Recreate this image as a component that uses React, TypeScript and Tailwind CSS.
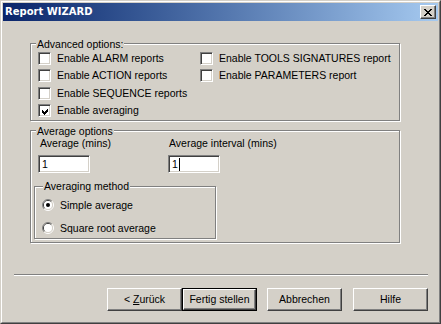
import React from 'react';

const raised = 'border border-t-white border-l-white border-r-[#404040] border-b-[#404040] shadow-[inset_-1px_-1px_0_#808080]';
const sunken =
    'border border-t-[#808080] border-l-[#808080] border-r-white border-b-white shadow-[inset_1px_1px_0_#404040,inset_-1px_-1px_0_#d4d0c8]';
const etched = 'relative border border-[#808080] shadow-[inset_1px_1px_0_#fff,1px_1px_0_#fff]';

function Legend({ text, left, top }: { text: string; left: string; top: string }) {
    return (
        <span className={`absolute ${left} ${top} px-px bg-[#d4d0c8] leading-[13px] whitespace-nowrap`}>
            {text}
        </span>
    );
}

function Checkbox({ label, checked }: { label: string; checked?: boolean }) {
    return (
        <div className="flex items-center gap-[6px] h-[13px] leading-[13px] whitespace-nowrap">
            <div className={`w-[13px] h-[13px] bg-white shrink-0 ${sunken}`}>
                {checked && (
                    <svg width="11" height="11" viewBox="-1 -1 11 11" shapeRendering="crispEdges">
                        <path d="M2 4 L4 6 L8 2 L8 5 L4 9 L2 7 Z" fill="#000" />
                    </svg>
                )}
            </div>
            <span>{label}</span>
        </div>
    );
}

function Radio({ label, checked }: { label: string; checked?: boolean }) {
    return (
        <div className="flex items-center gap-[6px] h-[14px] leading-[13px] whitespace-nowrap">
            <svg width="12" height="12" viewBox="0 0 12 12" className="shrink-0">
                <path d="M2.1 9.9 A5.5 5.5 0 0 1 9.9 2.1" stroke="#808080" fill="none" />
                <path d="M9.9 2.1 A5.5 5.5 0 0 1 2.1 9.9" stroke="#fff" fill="none" />
                <path d="M2.8 9.2 A4.5 4.5 0 0 1 9.2 2.8" stroke="#404040" fill="none" />
                <path d="M9.2 2.8 A4.5 4.5 0 0 1 2.8 9.2" stroke="#d4d0c8" fill="none" />
                <circle cx="6" cy="6" r="4" fill="#fff" />
                {checked && <circle cx="6" cy="6" r="2" fill="#000" />}
            </svg>
            <span>{label}</span>
        </div>
    );
}

function Button({ children, isDefault }: { children: React.ReactNode; isDefault?: boolean }) {
    const face = (
        <div className={`w-full h-full flex items-center justify-center leading-[13px] ${raised}`}>
            {children}
        </div>
    );
    if (isDefault) {
        return <div className="w-[75px] h-[23px] border border-black">{face}</div>;
    }
    return <div className="w-[75px] h-[23px]">{face}</div>;
}

export default function App() {
    return (
        <div className="w-[441px] h-[324px] bg-[#d4d0c8] border border-t-[#d4d0c8] border-l-[#d4d0c8] border-r-[#404040] border-b-[#404040] font-['Liberation_Sans',Arial,sans-serif] text-[10.5px] text-black">
            <div className="h-full p-px border border-t-white border-l-white border-r-[#808080] border-b-[#808080] flex flex-col">
                {/* title bar */}
                <div className="h-[18px] shrink-0 flex items-center justify-between pl-[2px] pr-[2px] bg-linear-to-r from-[#0a246a] to-[#a6caf0]">
                    <span className="font-['DejaVu_Sans',sans-serif] font-bold text-[10px] text-white leading-[12px]">
                        Report WIZARD
                    </span>
                    <div className={`w-[16px] h-[14px] bg-[#d4d0c8] flex items-center justify-center ${raised}`}>
                        <svg width="8" height="7" viewBox="0 0 8 7" shapeRendering="crispEdges">
                            <path d="M0 0h2v1H0zM6 0h2v1H6zM1 1h2v1H1zM5 1h2v1H5zM2 2h4v1H2zM3 3h2v1H3zM2 4h4v1H2zM1 5h2v1H1zM5 5h2v1H5zM0 6h2v1H0zM6 6h2v1H6z" fill="#000" />
                        </svg>
                    </div>
                </div>

                {/* body */}
                <div className="flex flex-col">
                    <div className={`ml-[27px] mt-[22px] w-[370px] h-[78px] ${etched}`}>
                        <Legend text="Advanced options:" left="left-[5px]" top="top-[-6px]" />
                        <div className="flex pt-[8px] pl-[7px]">
                            <div className="w-[162px] flex flex-col">
                                <div className="h-[17px]">
                                    <Checkbox label="Enable ALARM reports" />
                                </div>
                                <div className="h-[18px]">
                                    <Checkbox label="Enable ACTION reports" />
                                </div>
                                <div className="h-[17px]">
                                    <Checkbox label="Enable SEQUENCE reports" />
                                </div>
                                <div className="h-[13px]">
                                    <Checkbox label="Enable averaging" checked />
                                </div>
                            </div>
                            <div className="flex flex-col">
                                <div className="h-[17px]">
                                    <Checkbox label="Enable TOOLS SIGNATURES report" />
                                </div>
                                <div className="h-[18px]">
                                    <Checkbox label="Enable PARAMETERS report" />
                                </div>
                            </div>
                        </div>
                    </div>

                    <div className={`ml-[27px] mt-[9px] w-[370px] h-[113px] ${etched}`}>
                        <Legend text="Average options" left="left-[5px]" top="top-[-6px]" />
                        <div className="flex pt-[6px] pl-[7px]">
                            <div className="w-[130px] flex flex-col">
                                <span className="pl-[2px] leading-[13px]">Average (mins)</span>
                                <div className={`mt-[5px] w-[52px] h-[18px] bg-white pl-[3px] flex items-center leading-[13px] ${sunken}`}>
                                    1
                                </div>
                            </div>
                            <div className="flex flex-col">
                                <span className="pl-px leading-[13px]">Average interval (mins)</span>
                                <div className={`mt-[5px] w-[52px] h-[18px] bg-white pl-[3px] flex items-center leading-[13px] ${sunken}`}>
                                    1<span className="w-px h-[13px] bg-black ml-[1px]" />
                                </div>
                            </div>
                        </div>
                        <div className={`ml-[3px] mt-[13px] w-[182px] h-[53px] ${etched}`}>
                            <Legend text="Averaging method" left="left-[8px]" top="top-[-7px]" />
                            <div className="flex flex-col gap-[9px] pt-[11px] pl-[7px]">
                                <Radio label="Simple average" checked />
                                <Radio label="Square root average" />
                            </div>
                        </div>
                    </div>

                    <div className="ml-[11px] mt-[31px] w-[414px] h-[2px] border-t border-t-[#808080] border-b border-b-white" />

                    <div className="flex mt-[12px] ml-[104px]">
                        <Button>
                            &lt; <span className="underline ml-[3px]">Z</span>urück
                        </Button>
                        <Button isDefault>Fertig stellen</Button>
                        <div className="ml-[10px]">
                            <Button>Abbrechen</Button>
                        </div>
                        <div className="ml-[11px]">
                            <Button>Hilfe</Button>
                        </div>
                    </div>
                </div>
            </div>
        </div>
    );
}
